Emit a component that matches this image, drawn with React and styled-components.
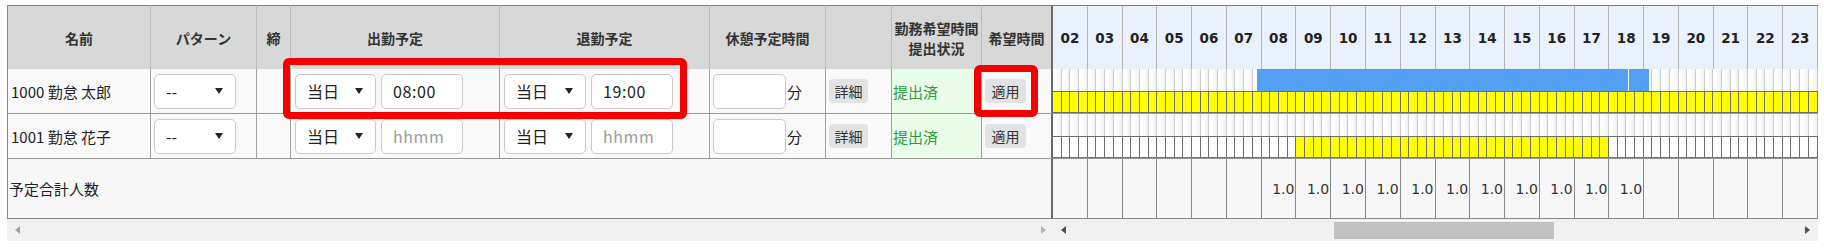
import React from 'react'
import styled, { createGlobalStyle } from 'styled-components'

const GlobalStyle = createGlobalStyle`
  html, body {
    margin: 0;
    padding: 0;
    background: #fff;
  }
  body {
    font-family: "Noto Sans CJK JP", "Noto Sans", sans-serif;
    color: #222;
  }
`

const HOURS = ['02', '03', '04', '05', '06', '07', '08', '09', '10', '11', '12', '13', '14', '15', '16', '17', '18', '19', '20', '21', '22', '23']
const SLOTS = HOURS.length * 4
const TOTALS = ['08', '09', '10', '11', '12', '13', '14', '15', '16', '17', '18']

const rows = [
    { name: '1000 勤怠 太郎', start: '08:00', end: '19:00', plan: true, wishFrom: 0, wishTo: SLOTS },
    { name: '1001 勤怠 花子', start: '', end: '', plan: false, wishFrom: 28, wishTo: 64 },
]

const Wrap = styled.div`
    position: relative;
    padding: 5px 0 0 7px;
`
const Grid = styled.div`
    display: grid;
    grid-template-columns: 143px 106px 34px 209px 210px 116px 66px 90px 71px 765px;
    grid-template-rows: 64px 45px 45px 60px 22px;
    width: max-content;
    border-left: 1px solid #8a8a8a;
`
const HeadCell = styled.div`
    display: flex;
    align-items: center;
    justify-content: center;
    text-align: center;
    background: #d8d8d8;
    border-top: 1px solid #7d7d7d;
    border-right: 1px solid ${p => p.$last ? '#6a6a6a' : '#bdbdbd'};
    border-right-width: ${p => p.$last ? '2px' : '1px'};
    font-weight: 700;
    font-size: 14px;
    line-height: 20px;
    color: #333;
`
const HourHeadRow = styled.div`
    display: grid;
    grid-template-columns: repeat(${HOURS.length}, 1fr);
    background: #e8f1fc;
    border-top: 1px solid #7d7d7d;
`
const HourHead = styled.div`
    display: flex;
    align-items: center;
    justify-content: center;
    border-right: 1px solid #b4b4b4;
    font-family: "DejaVu Sans", Verdana, sans-serif;
    font-weight: 700;
    font-size: 13.5px;
    color: #222;
`
const Cell = styled.div`
    display: flex;
    align-items: center;
    gap: ${p => p.$gap || 0}px;
    padding-left: ${p => p.$pad || 0}px;
    background: ${p => p.$bg || '#f9f9f9'};
    border-right: ${p => p.$last ? '2px solid #6a6a6a' : '1px solid #a0a0a0'};
    border-bottom: 1px solid #999;
    font-size: 15px;
    color: ${p => p.$color || '#222'};
    white-space: nowrap;
    overflow: hidden;
`
const SelectBox = styled.div`
    box-sizing: border-box;
    width: ${p => p.$w}px;
    height: 35px;
    display: flex;
    align-items: center;
    justify-content: space-between;
    padding: 0 12px 0 11px;
    background: #fff;
    border: 1px solid #c9c9c9;
    border-radius: 5px;
    font-size: 16px;
    color: #222;
`
const Caret = styled.span`
    width: 0;
    height: 0;
    border-left: 4.5px solid transparent;
    border-right: 4.5px solid transparent;
    border-top: 6px solid #222;
`
const TextInput = styled.input`
    box-sizing: border-box;
    width: ${p => p.$w}px;
    height: 35px;
    padding: 0 11px;
    background: #fff;
    border: 1px solid #c9c9c9;
    border-radius: 5px;
    font-family: "Noto Sans CJK JP", "Noto Sans", sans-serif;
    font-size: 16px;
    letter-spacing: 0.6px;
    color: #222;
    outline: none;

    &::placeholder {
        color: #9a9a9a;
    }
`
const SmallButton = styled.span`
    display: inline-flex;
    align-items: center;
    justify-content: center;
    width: ${p => p.$w}px;
    height: 24px;
    background: #e2e2e2;
    border-radius: 4px;
    font-size: 14px;
    color: #333;
`
const TimeRow = styled.div`
    position: relative;
    display: flex;
    flex-direction: column;
    border-bottom: 1px solid #999;
    background: #fff;
`
const SlotRow = styled.div`
    display: flex;
    height: 22px;
    box-sizing: border-box;
    border-top: ${p => p.$wish ? '1px solid #707070' : 'none'};
    border-bottom: ${p => p.$wish ? '1px solid #707070' : 'none'};
`
const PlanSlot = styled.div`
    flex: 1;
    border-right: 1px solid #cdcdcd;
    background: linear-gradient(to right, #fff 40%, #f1f1f1);
`
const WishSlot = styled.div`
    flex: 1;
    border-right: 1px solid #707070;
    background: ${p => p.$on ? '#ffff00' : '#fff'};
`
const PlanBar = styled.div`
    position: absolute;
    left: 204px;
    top: 0;
    width: 392px;
    height: 22px;
    background: linear-gradient(to right, #539ff4 371px, #fff 371px, #fff 372px, #539ff4 372px);
`
const TotalLabel = styled.div`
    grid-column: span 9;
    display: flex;
    align-items: center;
    padding-left: 1px;
    background: #f7f7f7;
    border-right: 2px solid #6a6a6a;
    border-bottom: 1px solid #888;
    font-size: 15px;
    color: #222;
`
const TotalRow = styled.div`
    display: grid;
    grid-template-columns: repeat(${HOURS.length}, 1fr);
    background: #f7f7f7;
    border-bottom: 1px solid #888;
`
const TotalCell = styled.div`
    display: flex;
    align-items: center;
    justify-content: flex-end;
    padding-right: 1px;
    border-right: 1px solid #8a8a8a;
    font-family: "DejaVu Sans", Verdana, sans-serif;
    font-size: 14px;
    color: #333;
`
const ScrollTrack = styled.div`
    grid-column: ${p => p.$span ? 'span 9' : 'auto'};
    display: flex;
    align-items: center;
    padding: 0 ${p => p.$padR}px 0 ${p => p.$padL}px;
    background: #f1f1f1;
    margin-left: ${p => p.$span ? '-1px' : '0'};
`
const Arrow = styled.span`
    width: 0;
    height: 0;
    border-top: 4px solid transparent;
    border-bottom: 4px solid transparent;
    ${p => p.$dir === 'left'
        ? `border-right: 5px solid ${p.$color};`
        : `border-left: 5px solid ${p.$color};`}
`
const Spacer = styled.span`
    flex: 1;
`
const Thumb = styled.span`
    height: 17px;
    width: ${p => p.$w}px;
    margin-left: ${p => p.$left}px;
    background: #c1c1c1;
`
const Highlight = styled.div`
    position: absolute;
    left: ${p => p.$x}px;
    top: ${p => p.$y}px;
    width: ${p => p.$w}px;
    height: ${p => p.$h}px;
    box-sizing: border-box;
    border: 7px solid #f40000;
    border-radius: 6px;
    pointer-events: none;
`

function Select({ value, w }) {
    return (
        <SelectBox $w={w}>
            <span>{value}</span>
            <Caret />
        </SelectBox>
    )
}

export default function App() {
    return (
        <>
            <GlobalStyle />
            <Wrap>
                <Grid>
                    <HeadCell>名前</HeadCell>
                    <HeadCell>パターン</HeadCell>
                    <HeadCell>締</HeadCell>
                    <HeadCell>出勤予定</HeadCell>
                    <HeadCell>退勤予定</HeadCell>
                    <HeadCell>休憩予定時間</HeadCell>
                    <HeadCell></HeadCell>
                    <HeadCell>勤務希望時間<br />提出状況</HeadCell>
                    <HeadCell $last>希望時間</HeadCell>
                    <HourHeadRow>
                        {HOURS.map(h => <HourHead key={h}>{h}</HourHead>)}
                    </HourHeadRow>

                    {rows.map(r => (
                        <React.Fragment key={r.name}>
                            <Cell $pad={3}>{r.name}</Cell>
                            <Cell $pad={3}><Select value="--" w={82} /></Cell>
                            <Cell></Cell>
                            <Cell $pad={4} $gap={5}>
                                <Select value="当日" w={81} />
                                <TextInput $w={82} readOnly value={r.start} placeholder="hhmm" />
                            </Cell>
                            <Cell $pad={4} $gap={5}>
                                <Select value="当日" w={82} />
                                <TextInput $w={82} readOnly value={r.end} placeholder="hhmm" />
                            </Cell>
                            <Cell $pad={3} $gap={1}>
                                <TextInput $w={73} readOnly value="" />
                                <span>分</span>
                            </Cell>
                            <Cell $pad={3}><SmallButton $w={39}>詳細</SmallButton></Cell>
                            <Cell $pad={1} $bg="#e9fde9" $color="#2f9a3c">提出済</Cell>
                            <Cell $pad={3} $last><SmallButton $w={41}>適用</SmallButton></Cell>
                            <TimeRow>
                                <SlotRow>
                                    {Array.from({ length: SLOTS }, (_, i) => <PlanSlot key={i} />)}
                                </SlotRow>
                                <SlotRow $wish>
                                    {Array.from({ length: SLOTS }, (_, i) => (
                                        <WishSlot key={i} $on={i >= r.wishFrom && i < r.wishTo} />
                                    ))}
                                </SlotRow>
                                {r.plan && <PlanBar />}
                            </TimeRow>
                        </React.Fragment>
                    ))}

                    <TotalLabel>予定合計人数</TotalLabel>
                    <TotalRow>
                        {HOURS.map(h => (
                            <TotalCell key={h}>{TOTALS.includes(h) ? '1.0' : ''}</TotalCell>
                        ))}
                    </TotalRow>

                    <ScrollTrack $span $padL={8} $padR={7}>
                        <Arrow $dir="left" $color="#a3a3a3" />
                        <Spacer />
                        <Arrow $dir="right" $color="#b5b5b5" />
                    </ScrollTrack>
                    <ScrollTrack $padL={8} $padR={8}>
                        <Arrow $dir="left" $color="#505050" />
                        <Thumb $left={268} $w={220} />
                        <Spacer />
                        <Arrow $dir="right" $color="#505050" />
                    </ScrollTrack>
                </Grid>
                <Highlight $x={283} $y={58} $w={404} $h={61} />
                <Highlight $x={974} $y={65} $w={64} $h={52} />
            </Wrap>
        </>
    )
}
